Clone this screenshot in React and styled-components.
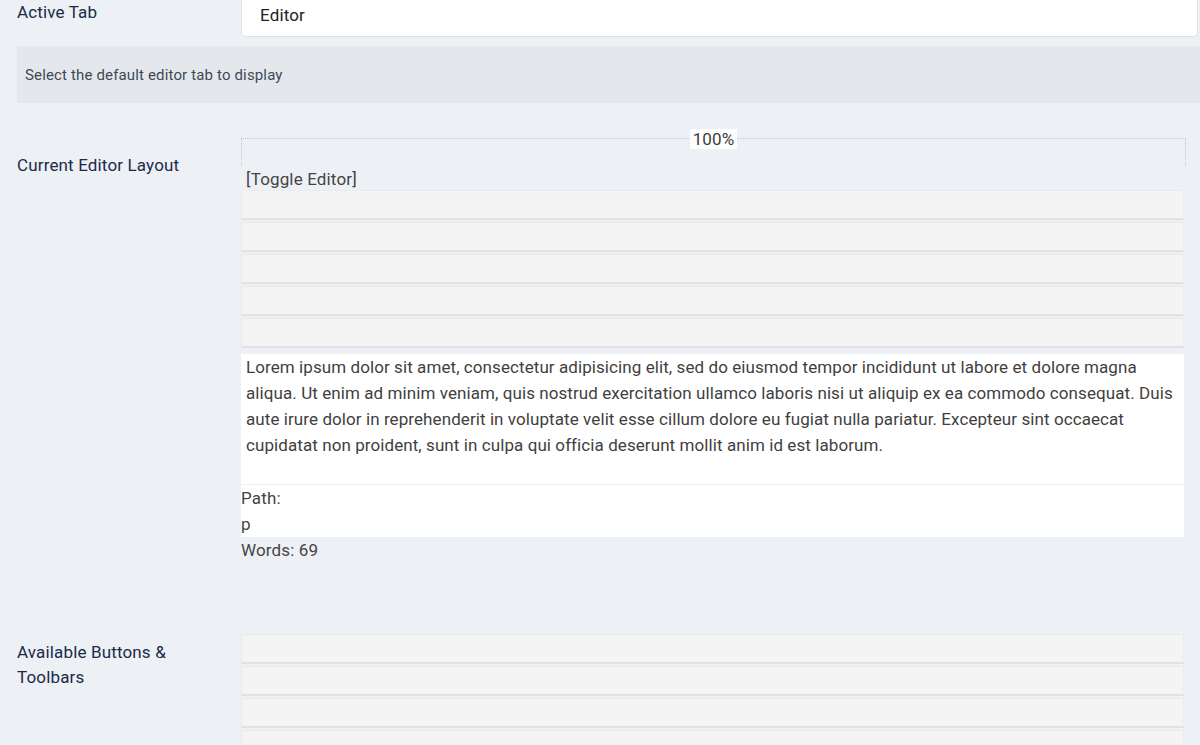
import styled, { createGlobalStyle } from "styled-components";

const GlobalStyle = createGlobalStyle`
  body {
    margin: 0;
    background: #edf1f5;
    font-family: Roboto, "Liberation Sans", sans-serif;
    letter-spacing: 0.15px;
  }
`;

const lorem =
  "Lorem ipsum dolor sit amet, consectetur adipisicing elit, sed do eiusmod tempor incididunt ut labore et dolore magna aliqua. Ut enim ad minim veniam, quis nostrud exercitation ullamco laboris nisi ut aliquip ex ea commodo consequat. Duis aute irure dolor in reprehenderit in voluptate velit esse cillum dolore eu fugiat nulla pariatur. Excepteur sint occaecat cupidatat non proident, sunt in culpa qui officia deserunt mollit anim id est laborum.";

const App = () => {
  return (
    <Page>
      <GlobalStyle />
      <Row>
        <Label>Active Tab</Label>
        <Select>Editor</Select>
      </Row>
      <Description>Select the default editor tab to display</Description>

      <Row $top={25}>
        <Label $pad={25}>Current Editor Layout</Label>
        <EditorColumn>
          <Frame>
            <Legend>100%</Legend>
          </Frame>
          <Toggle>[Toggle Editor]</Toggle>
          <Toolbars>
            {[0, 1, 2, 3, 4].map((i) => (
              <Toolbar key={i} />
            ))}
          </Toolbars>
          <Content>{lorem}</Content>
          <Status>
            <div>Path:</div>
            <div>p</div>
          </Status>
          <Words>Words: 69</Words>
        </EditorColumn>
      </Row>

      <Row $top={71}>
        <Label $pad={6}>Available Buttons &amp; Toolbars</Label>
        <EditorColumn>
          <Toolbars>
            {[0, 1, 2, 3].map((i) => (
              <Toolbar key={i} />
            ))}
          </Toolbars>
        </EditorColumn>
      </Row>
    </Page>
  );
};

const Page = styled.div`
  width: 1183px;
  padding-left: 17px;
  height: 745px;
  overflow: hidden;
`;

const Row = styled.div`
  display: grid;
  grid-template-columns: 224px 1fr;
  margin-top: ${(p) => p.$top || 0}px;
`;

const Label = styled.div`
  padding-top: ${(p) => p.$pad || 0}px;
  max-width: 185px;
  font-size: 17px;
  line-height: 25px;
  color: #1a2a48;
`;

const Select = styled.div`
  height: 37px;
  box-sizing: border-box;
  padding: 3px 0 0 18px;
  margin-right: 2px;
  background: #fff;
  border: 1px solid #dde3ea;
  border-top: none;
  border-radius: 0 0 5px 5px;
  font-size: 17px;
  line-height: 24px;
  color: #222;
`;

const Description = styled.div`
  margin-top: 9px;
  height: 57px;
  display: flex;
  align-items: center;
  padding: 0 8px;
  background: #e4e8ed;
  font-size: 15px;
  color: #404856;
`;

const EditorColumn = styled.div`
  display: flex;
  flex-direction: column;
  width: 943px;
`;

const Frame = styled.div`
  margin-top: 10px;
  width: 945px;
  height: 28px;
  box-sizing: border-box;
  border: 1px dotted #c4c8cc;
  border-bottom: none;
  display: flex;
  justify-content: center;
`;

const Legend = styled.span`
  margin-top: -10px;
  height: 20px;
  padding: 0 3px;
  background: #fff;
  font-size: 17px;
  line-height: 20px;
  color: #3c3c3c;
`;

const Toggle = styled.div`
  padding: 3px 5px 0;
  font-size: 17px;
  line-height: 21px;
  color: #444;
`;

const Toolbars = styled.div`
  display: flex;
  flex-direction: column;
  gap: 2px;
`;

const Toolbar = styled.div`
  height: 30px;
  box-sizing: border-box;
  background: #f4f4f4;
  border: 1px solid #ebebeb;
  border-bottom: 2px solid #dfe3e8;
`;

const Content = styled.div`
  margin-top: 6px;
  padding: 0 0 26px 5px;
  background: #fff;
  font-size: 17px;
  line-height: 26px;
  letter-spacing: 0.08px;
  color: #3f3f3f;
`;

const Status = styled.div`
  background: #fff;
  border-top: 1px solid #f1f1f1;
  font-size: 17px;
  line-height: 26px;
  color: #444;
`;

const Words = styled.div`
  font-size: 17px;
  line-height: 26px;
  color: #444;
`;

export default App;
